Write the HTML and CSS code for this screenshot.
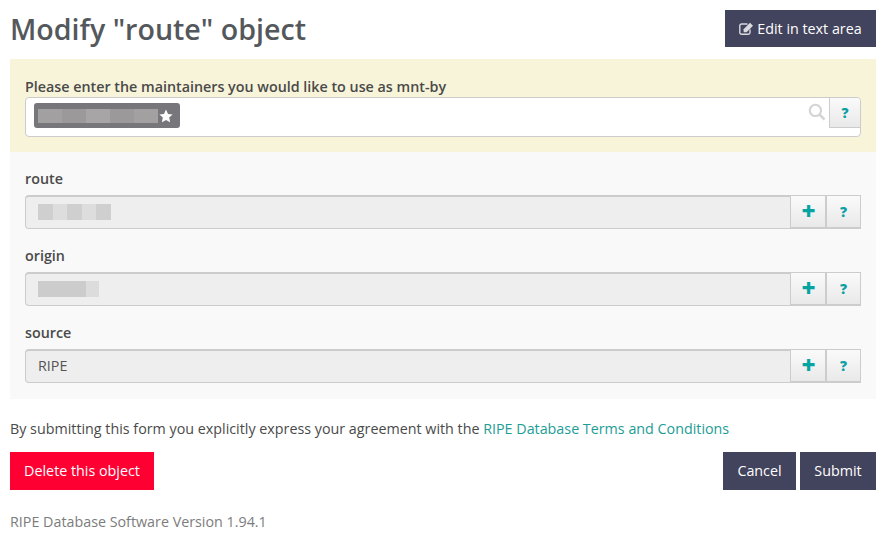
FILE: index.html
```html
<!DOCTYPE html>
<html lang="en">
<head>
<meta charset="utf-8">
<title>Modify route object</title>
<link rel="stylesheet" href="styles.css">
</head>
<body>
<main class="page">
  <header class="head">
    <h1 class="title">Modify "route" object</h1>
    <button class="btn btn-dark btn-edit" type="button">
      <svg class="edit-icon" viewBox="0 0 15 13" width="15" height="13" aria-hidden="true"><path d="M11 7.500v3a1.700 1.700 0 0 1-1.700 1.700H2.500A1.700 1.700 0 0 1 .8 10.500V3.700A1.700 1.700 0 0 1 2.500 2H8.500" fill="none" stroke="currentColor" stroke-width="1.400"/><path d="M4.600 7.200 11 .8l3 3-6.400 6.400H4.600z" fill="currentColor"/></svg>
      Edit in text area
    </button>
  </header>

  <section class="mnt">
    <label class="mnt-label">Please enter the maintainers you would like to use as mnt-by</label>
    <div class="mnt-box">
      <span class="tag">
        <span class="blur blur-tag"><i class="b1"></i><i class="b2"></i><i class="b3"></i><i class="b2"></i><i class="b1"></i></span>
        <svg class="star" viewBox="0 0 14 14" width="14" height="14" aria-hidden="true"><path d="M7 .6l2 4.300 4.600.6-3.400 3.100.9 4.600L7 10.900l-4.100 2.300.9-4.600L.4 5.500 5 4.900z" fill="#fff"/></svg>
      </span>
      <svg class="search" viewBox="0 0 17 17" width="18" height="18" aria-hidden="true"><circle cx="7" cy="7" r="5.300" fill="none" stroke="currentColor" stroke-width="2"/><path d="M11 11l4.600 4.600" stroke="currentColor" stroke-width="2.400"/></svg>
      <button class="icon-btn help-top" type="button">?</button>
    </div>
  </section>

  <section class="fields">
    <div class="field">
      <label class="field-label">route</label>
      <div class="group">
        <div class="input"><span class="blur blur-route"><i class="c1"></i><i class="c2"></i><i class="c1"></i><i class="c2"></i><i class="c1"></i></span></div>
        <button class="icon-btn plus" type="button">+</button>
        <button class="icon-btn help" type="button">?</button>
      </div>
    </div>
    <div class="field">
      <label class="field-label">origin</label>
      <div class="group">
        <div class="input"><span class="blur blur-origin"><i class="c1 wide"></i><i class="c2"></i></span></div>
        <button class="icon-btn plus" type="button">+</button>
        <button class="icon-btn help" type="button">?</button>
      </div>
    </div>
    <div class="field">
      <label class="field-label">source</label>
      <div class="group">
        <div class="input">RIPE</div>
        <button class="icon-btn plus" type="button">+</button>
        <button class="icon-btn help" type="button">?</button>
      </div>
    </div>
  </section>

  <p class="terms">By submitting this form you explicitly express your agreement with the <a href="#">RIPE Database Terms and Conditions</a></p>

  <div class="actions">
    <button class="btn btn-red" type="button">Delete this object</button>
    <div class="actions-right">
      <button class="btn btn-dark btn-cancel" type="button">Cancel</button>
      <button class="btn btn-dark btn-submit" type="button">Submit</button>
    </div>
  </div>

  <p class="version">RIPE Database Software Version 1.94.1</p>
</main>
</body>
</html>
```
FILE: styles.css
```css
* { box-sizing: border-box; }
html, body { margin: 0; background: #fff; }
body { font-family: "Open Sans", sans-serif; font-size: 14.3px; color: #4a4a4a; }
.page { width: 866px; margin-left: 10px; }

.head { display: flex; justify-content: space-between; align-items: flex-start; padding-top: 10px; height: 59px; }
.title { margin: 0; font-size: 28.6px; font-weight: 600; line-height: 37px; color: #54585c; }

.btn { border: 0; border-radius: 0; font-family: inherit; font-size: 14.3px; color: #fff; line-height: 20px; cursor: pointer; }
.btn-dark { background: #42435c; height: 38px; padding: 0 14px; }
.btn-red { background: #ff0033; height: 38px; width: 144px; padding: 0; }
.btn-cancel { width: 73px; padding: 0; }
.btn-submit { width: 76px; padding: 0; }
.btn-edit { height: 37px; width: 151px; padding: 0; display: flex; align-items: center; justify-content: center; gap: 3px; }
.edit-icon { color: #d9d9df; }

.mnt { background: #f8f4da; height: 93px; padding: 18px 15px 0; }
.mnt-label { display: block; font-weight: 600; line-height: 20px; color: #4a4a4a; }
.mnt-box { height: 40px; background: #fff; border: 1px solid #ccc; border-radius: 4px; display: flex; align-items: flex-start; position: relative; }
.tag { margin: 5px 0 0 8px; width: 146px; height: 25px; background: #77777b; border-radius: 3px; display: flex; align-items: center; padding-left: 4px; gap: 1px; }
.blur { display: flex; }
.blur i { display: block; }
.blur-tag { height: 14px; width: 120px; }
.blur-tag .b1 { flex: 1; background: #a3a0a1; }
.blur-tag .b2 { flex: 1; background: #9c999b; }
.blur-tag .b3 { flex: 1; background: #a8a5a6; }
.search { margin: 5px 3px 0 auto; color: #d4d4d4; }

.icon-btn { border: 1px solid #ccc; border-bottom-width: 2px; background: linear-gradient(#fafafa, #e9e9e9); font-family: "Open Sans", sans-serif; font-weight: 800; color: #0c9fa3; padding: 0; cursor: pointer; }
.help-top { width: 31px; height: 30px; border-width: 0 0 1px 1px; border-radius: 0 4px 0 0; font-size: 14px; }
.plus { width: 37px; font-size: 24px; line-height: 1; border-right-width: 2px; padding: 0 0 1px 1px; color: #06a3a3; }
.help { width: 34px; font-size: 14px; border-left-width: 0; }

.fields { background: #f9f9f9; height: 247px; padding: 16px 15px 0; }
.field { height: 77px; }
.field-label { display: block; font-weight: 600; line-height: 20px; height: 27px; color: #4a4a4a; padding-top: 1px; }
.group { display: flex; height: 34px; }
.input { flex: 1; background: #eeeeee; border: 1px solid #ccc; border-top-width: 2px; border-right: 0; border-radius: 4px 0 0 4px; padding: 0 12px 2px; display: flex; align-items: center; color: #555; }
.blur-route, .blur-origin { height: 16px; }
.blur-route .c1 { width: 16px; background: #cfcfcf; }
.blur-route .c2 { width: 16px; background: #dddddd; }
.blur-route { width: 73px; overflow: hidden; }
.blur-origin .c1.wide { width: 48px; background: #cccccc; }
.blur-origin .c2 { width: 13px; background: #dcdcdc; }

.terms { margin: 0; height: 53px; padding-top: 20px; line-height: 20px; color: #4a4a4a; }
.terms a { color: #1d9d96; text-decoration: none; }

.actions { display: flex; justify-content: space-between; }
.actions-right { display: flex; gap: 4px; }
.version { margin: 0; padding-top: 22px; line-height: 20px; color: #7c7c7c; }
```
